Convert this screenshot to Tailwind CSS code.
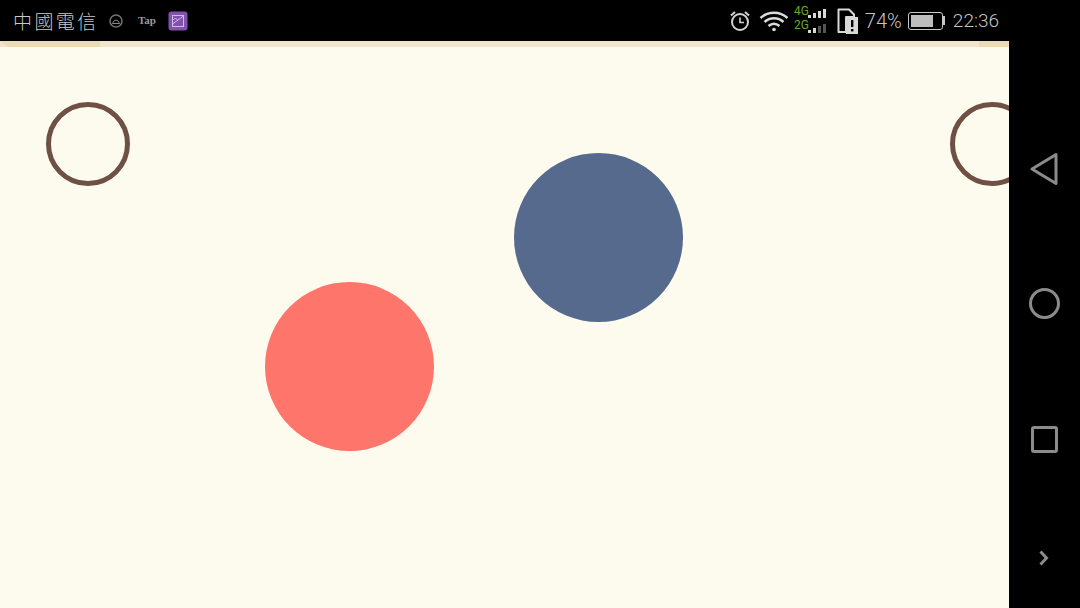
<!DOCTYPE html>
<html lang="en">
<head>
<meta charset="UTF-8">
<script src="https://cdn.jsdelivr.net/npm/@tailwindcss/browser@4"></script>
<title>Game</title>
</head>
<body class="bg-black w-[1080px] h-[608px] overflow-hidden flex flex-col font-['Roboto',sans-serif]">
  <!-- status bar -->
  <div class="h-[41px] shrink-0 flex items-center bg-black text-[#c4c4c4]">
    <span class="ml-[13px] w-[84px] whitespace-nowrap text-[19px] tracking-[2.4px] font-light leading-none text-[#c8c8c8] font-['Noto_Sans_CJK_TC',sans-serif]">中國電信</span>
    <svg class="ml-[11px]" width="16" height="16" viewBox="0 0 16 16" fill="none">
      <circle cx="8" cy="8" r="6" stroke="#6f6f6f" stroke-width="1.6"/>
      <path d="M4.5 10.5 C6 6 10 6 11.5 10.5 H4.5Z" stroke="#8a8a8a" stroke-width="1"/>
    </svg>
    <span class="ml-[13px] w-[20px] text-center text-[11px] font-bold text-[#9a9a9a] leading-none font-['Liberation_Serif',serif]">Tap</span>
    <svg class="ml-[11px]" width="20" height="20" viewBox="0 0 20 20" fill="none">
      <rect width="19" height="19" x="0.5" y="0.5" rx="3" fill="#8152ae"/>
      <rect x="4.5" y="4.5" width="11" height="11" stroke="#d3bde6" stroke-width="1"/>
      <path d="M4.5 13 L15.5 5 M5 9 C7 7 8 7 9.5 9" stroke="#d3bde6" stroke-width="1"/>
    </svg>

    <div class="ml-auto flex items-center">
      <svg width="22" height="22" viewBox="0 0 22 22" fill="none" stroke="#d2d2d2">
        <circle cx="11" cy="12" r="8" stroke-width="2"/>
        <path d="M11 7.5V12.5H15" stroke-width="1.6"/>
        <path d="M2 5.5L6 2M20 5.5L16 2" stroke-width="2"/>
      </svg>
      <svg class="ml-[8px]" width="30" height="22" viewBox="0 0 30 22" fill="none" stroke="#dcdcdc" stroke-width="2.4">
        <path d="M1.5 8 C9 1 21 1 28.5 8"/>
        <path d="M5.5 12 C11 7 19 7 24.5 12"/>
        <path d="M9.5 16 C13 13 17 13 20.5 16"/>
        <circle cx="15" cy="19.5" r="1.8" fill="#dcdcdc" stroke="none"/>
      </svg>
      <svg class="ml-[5px]" width="35" height="32" viewBox="0 0 35 32">
        <text x="0" y="10" font-size="12" fill="#6aa52f" font-family="Roboto">4G</text>
        <text x="0" y="24" font-size="12" fill="#6aa52f" font-family="Roboto">2G</text>
        <g fill="#d8d8d8">
          <rect x="14" y="10" width="3" height="3"/>
          <rect x="19" y="8" width="3" height="5"/>
          <rect x="24" y="6" width="3" height="7"/>
          <rect x="29" y="4" width="3" height="9"/>
          <rect x="14" y="25" width="3" height="3"/>
          <rect x="19" y="23" width="3" height="5"/>
        </g>
        <g fill="#555">
          <rect x="24" y="21" width="3" height="7"/>
          <rect x="29" y="19" width="3" height="9"/>
        </g>
      </svg>
      <svg class="ml-[8px]" width="22" height="28" viewBox="0 0 22 28" fill="none">
        <path d="M1.5 2.5H12L17 7.5V10H9V25H1.5Z" stroke="#d8d8d8" stroke-width="2" stroke-linejoin="round"/>
        <rect x="9" y="10" width="12" height="17" fill="#d8d8d8"/>
        <rect x="14" y="13" width="2.4" height="7" fill="#000"/>
        <rect x="14" y="22" width="2.4" height="2.4" fill="#000"/>
      </svg>
      <span class="ml-[6px] text-[20px] leading-none font-light">74%</span>
      <div class="ml-[6px] flex items-center">
        <div class="w-[35px] h-[18px] border-[1.5px] border-[#c8c8c8] rounded-[3px] p-[2px]">
          <div class="w-[22px] h-full bg-[#bdbdbd]"></div>
        </div>
        <div class="w-[2px] h-[9px] bg-[#c8c8c8]"></div>
      </div>
      <span class="ml-[8px] mr-[81px] text-[19px] leading-none font-light">22:36</span>
    </div>
  </div>

  <div class="flex-1 flex min-h-0">
    <!-- game area -->
    <div class="relative w-[1009px] bg-[#fdfaee] overflow-hidden">
      <div class="h-[6px] bg-[#f2e5cd] flex justify-between">
        <div class="w-[100px] bg-[#eddbb8] [clip-path:polygon(0_0,100%_0,100%_100%,8px_100%)]"></div>
        <div class="w-[30px] bg-[#eddbb8]"></div>
      </div>
      <div class="absolute left-[46px] top-[61px] w-[84px] h-[84px] rounded-full border-[5px] border-[#6f5044]"></div>
      <div class="absolute left-[950px] top-[61px] w-[84px] h-[84px] rounded-full border-[5px] border-[#6f5044]"></div>
      <div class="absolute left-[514px] top-[112px] w-[169px] h-[169px] rounded-full bg-[#566a8e]"></div>
      <div class="absolute left-[265px] top-[241px] w-[169px] h-[169px] rounded-full bg-[#fe756c]"></div>
    </div>

    <!-- nav bar -->
    <div class="w-[71px] bg-black relative">
      <svg class="absolute left-[20px] top-[110px]" width="32" height="36" viewBox="0 0 32 36" fill="none">
        <path d="M27 3.5V32.5L3 18Z" stroke="#8b8b8b" stroke-width="3" stroke-linejoin="round"/>
      </svg>
      <svg class="absolute left-[20px] top-[247px]" width="31" height="31" viewBox="0 0 31 31" fill="none">
        <circle cx="15.5" cy="15.5" r="14" stroke="#8b8b8b" stroke-width="3"/>
      </svg>
      <svg class="absolute left-[22px] top-[385px]" width="27" height="27" viewBox="0 0 27 27" fill="none">
        <rect x="1.5" y="1.5" width="24" height="24" rx="1.5" stroke="#8b8b8b" stroke-width="3"/>
      </svg>
      <svg class="absolute left-[29px] top-[508px]" width="12" height="18" viewBox="0 0 12 18" fill="none">
        <path d="M2.5 2.5L8.5 9L2.5 15.5" stroke="#8b8b8b" stroke-width="3"/>
      </svg>
    </div>
  </div>
</body>
</html>
